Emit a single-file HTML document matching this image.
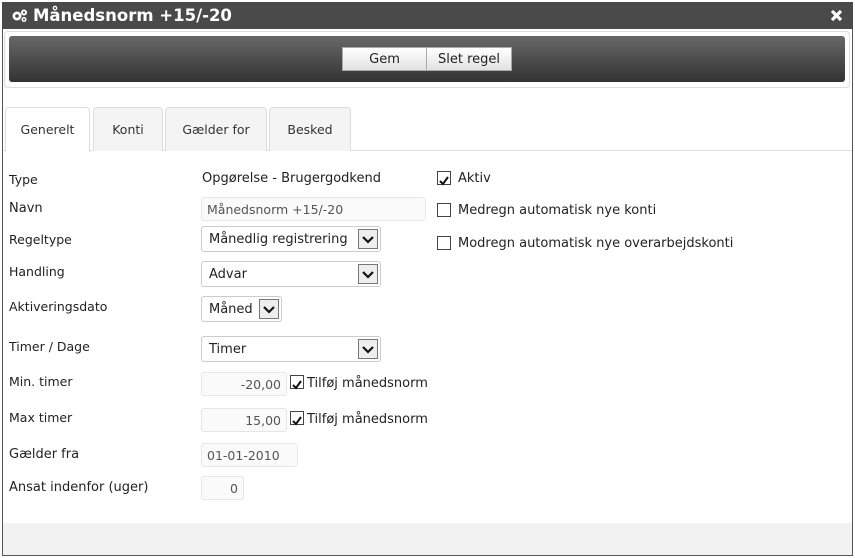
<!DOCTYPE html>
<html><head><meta charset="utf-8"><style>
*{box-sizing:border-box;margin:0;padding:0}
body{width:855px;height:558px;background:#fff;font-family:"DejaVu Sans","Liberation Sans",sans-serif;position:relative;overflow:hidden;color:#222}
.a{position:absolute}
.dlg{left:2px;top:2px;width:851px;height:554px;border:1px solid #555;background:#fff}
.title{left:2px;top:2px;width:851px;height:27px;background:#4a4a4a;color:#fff;font-weight:bold;font-size:16.5px;line-height:28px;padding-left:31px}
.tb{left:9px;top:36px;width:836px;height:46px;background:linear-gradient(#686868,#333);border-radius:3px}
.tbw{left:4px;top:31px;width:846px;height:57px;border:1px solid #ddd;border-radius:4px}
.btn{top:47px;height:24px;background:linear-gradient(#fff,#e2e2e2);border:1px solid #aaa;font-size:13px;line-height:24px;text-align:center;color:#222}
.tab{top:107px;height:44px;border:1px solid #ddd;border-bottom:none;border-radius:4px 4px 0 0;background:#f4f4f4;font-size:12.5px;line-height:44px;text-align:center;color:#333}
.lbl{left:9px;font-size:12.5px;margin-top:1px}
.inp{left:201px;height:24px;border:1px solid #e6e6e6;border-radius:3px;background:#fafafa;font-size:12.5px;line-height:24px;padding:0 5px;color:#555}
.sel{left:201px;height:26px;border:1px solid #ccc;border-radius:3px;background:#fff;font-size:13px;line-height:26px;padding-left:7px;color:#222}
.arr{position:absolute;right:2px;top:2px;width:20px;height:20px;border:1px solid #777;background:#eee}
.cb{width:14px;height:14px;border:1px solid #444;background:#fff}
.rt{font-size:13px;margin-top:1px}
</style></head><body>
<div class="a dlg"></div>
<div class="a title">Månedsnorm +15/-20</div>
<svg class="a" style="left:11px;top:8px" width="18" height="15" viewBox="0 0 18 15"><g fill="#fff"><circle cx="6" cy="8" r="4.5"/><circle cx="13" cy="4.5" r="3"/><circle cx="13" cy="11.5" r="2.5"/></g><g fill="#4a4a4a"><circle cx="6" cy="8" r="1.8"/><circle cx="13" cy="4.5" r="1.1"/><circle cx="13" cy="11.5" r="1"/></g></svg>
<svg class="a" style="left:830px;top:9px" width="13" height="13" viewBox="0 0 13 13"><path d="M2 2L11 11M11 2L2 11" stroke="#fff" stroke-width="3.2"/></svg>
<div class="a tbw"></div>
<div class="a tb"></div>
<div class="a btn" style="left:342px;width:85px">Gem</div>
<div class="a btn" style="left:426px;width:86px">Slet regel</div>
<div class="a" style="left:3px;top:150px;width:849px;border-top:1px solid #ddd"></div>
<div class="a tab" style="left:5px;width:85px;background:#fff;height:45px">Generelt</div>
<div class="a tab" style="left:93px;width:70px">Konti</div>
<div class="a tab" style="left:165px;width:102px">Gælder for</div>
<div class="a tab" style="left:269px;width:82px">Besked</div>

<div class="a lbl" style="top:171px">Type</div>
<div class="a lbl" style="top:200px;font-size:13px">Navn</div>
<div class="a lbl" style="top:231px">Regeltype</div>
<div class="a lbl" style="top:263px">Handling</div>
<div class="a lbl" style="top:298px">Aktiveringsdato</div>
<div class="a lbl" style="top:338px">Timer / Dage</div>
<div class="a lbl" style="top:373px">Min. timer</div>
<div class="a lbl" style="top:409px">Max timer</div>
<div class="a lbl" style="top:446px;font-size:13px">Gælder fra</div>
<div class="a lbl" style="top:479px;font-size:13px">Ansat indenfor (uger)</div>

<div class="a rt" style="left:202px;top:170px">Opgørelse - Brugergodkend</div>
<div class="a inp" style="top:197px;width:225px">Månedsnorm +15/-20</div>
<div class="a sel" style="top:226px;width:180px">Månedlig registrering<div class="arr"><svg width="18" height="18" viewBox="0 0 18 18"><path d="M4 7L9 12L14 7" stroke="#111" stroke-width="2.2" fill="none"/></svg></div></div>
<div class="a sel" style="top:261px;width:180px">Advar<div class="arr"><svg width="18" height="18" viewBox="0 0 18 18"><path d="M4 7L9 12L14 7" stroke="#111" stroke-width="2.2" fill="none"/></svg></div></div>
<div class="a sel" style="top:296px;width:81px">Måned<div class="arr"><svg width="18" height="18" viewBox="0 0 18 18"><path d="M4 7L9 12L14 7" stroke="#111" stroke-width="2.2" fill="none"/></svg></div></div>
<div class="a sel" style="top:336px;width:180px">Timer<div class="arr"><svg width="18" height="18" viewBox="0 0 18 18"><path d="M4 7L9 12L14 7" stroke="#111" stroke-width="2.2" fill="none"/></svg></div></div>
<div class="a inp" style="top:372px;width:86px;text-align:right">-20,00</div>
<div class="a inp" style="top:408px;width:86px;text-align:right">15,00</div>
<div class="a inp" style="top:443px;width:97px">01-01-2010</div>
<div class="a inp" style="top:476px;width:43px;text-align:right">0</div>

<div class="a cb" style="left:290px;top:375px"><svg width="12" height="12" viewBox="0 0 12 12"><path d="M2 6L5 9L10 2" stroke="#111" stroke-width="2" fill="none"/></svg></div>
<div class="a rt" style="left:307px;top:375px">Tilføj månedsnorm</div>
<div class="a cb" style="left:290px;top:411px"><svg width="12" height="12" viewBox="0 0 12 12"><path d="M2 6L5 9L10 2" stroke="#111" stroke-width="2" fill="none"/></svg></div>
<div class="a rt" style="left:307px;top:411px">Tilføj månedsnorm</div>

<div class="a cb" style="left:437px;top:171px"><svg width="12" height="12" viewBox="0 0 12 12"><path d="M2 6L5 9L10 2" stroke="#111" stroke-width="2" fill="none"/></svg></div>
<div class="a rt" style="left:458px;top:170px">Aktiv</div>
<div class="a cb" style="left:437px;top:203px"></div>
<div class="a rt" style="left:458px;top:202px">Medregn automatisk nye konti</div>
<div class="a cb" style="left:437px;top:236px"></div>
<div class="a rt" style="left:458px;top:235px">Modregn automatisk nye overarbejdskonti</div>

<div class="a" style="left:3px;top:523px;width:849px;height:32px;background:#f2f2f2"></div>
</body></html>
